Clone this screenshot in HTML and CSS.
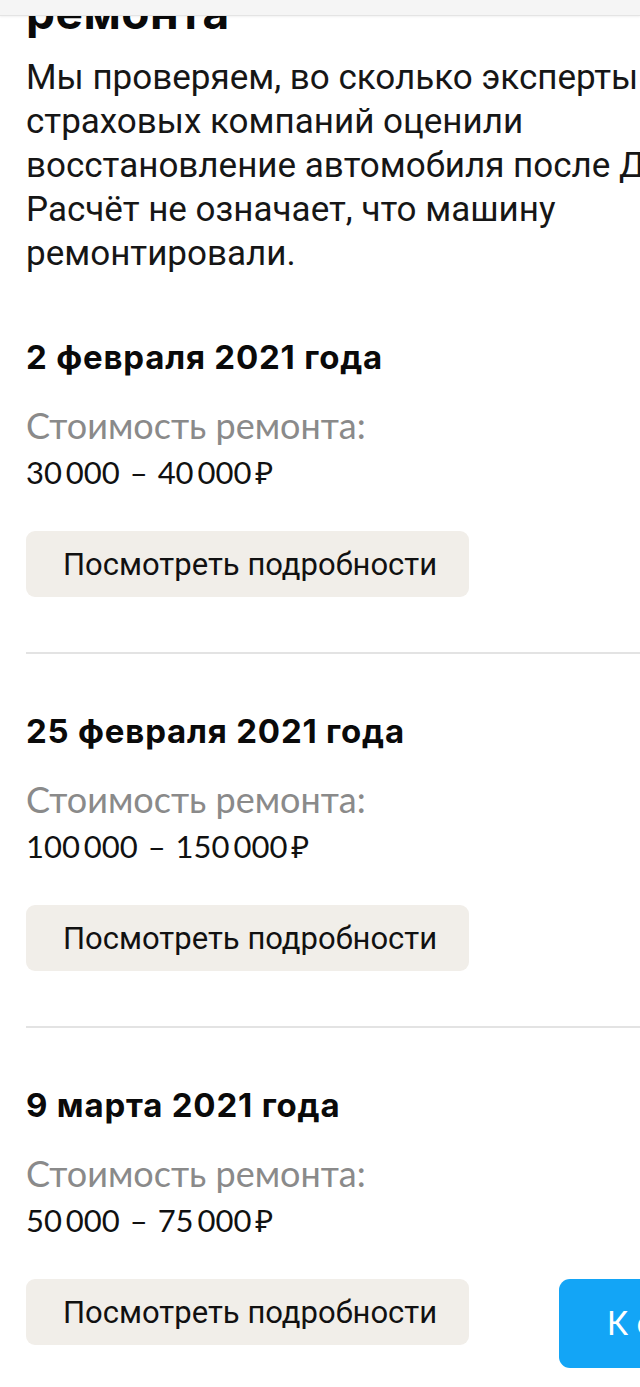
FILE: index.html
```html
<!DOCTYPE html>
<html lang="ru">
<head>
<meta charset="utf-8">
<title>История расчётов ремонта</title>
<link rel="stylesheet" href="styles.css">
</head>
<body>
<div class="topbar"></div>
<main class="page">
  <h1 class="title">ремонта</h1>
  <p class="intro">Мы проверяем, во сколько эксперты<br>страховых компаний оценили<br>восстановление автомобиля после ДТП.<br>Расчёт не означает, что машину<br>ремонтировали.</p>

  <section class="entry">
    <h2 class="date">2 февраля 2021 года</h2>
    <div class="label">Стоимость ремонта:</div>
    <div class="price">30&#8201;000 – 40&#8201;000&#8201;₽</div>
    <div class="actions"><button class="btn-details">Посмотреть подробности</button></div>
  </section>

  <section class="entry">
    <h2 class="date">25 февраля 2021 года</h2>
    <div class="label">Стоимость ремонта:</div>
    <div class="price">100&#8201;000 – 150&#8201;000&#8201;₽</div>
    <div class="actions"><button class="btn-details">Посмотреть подробности</button></div>
  </section>

  <section class="entry last">
    <h2 class="date">9 марта 2021 года</h2>
    <div class="label">Стоимость ремонта:</div>
    <div class="price">50&#8201;000 – 75&#8201;000&#8201;₽</div>
    <div class="actions">
      <button class="btn-details">Посмотреть подробности</button>
      <button class="btn-primary">К отчёту</button>
    </div>
  </section>
</main>
</body>
</html>
```
FILE: styles.css
```css
html, body {
  margin: 0;
  padding: 0;
  background: #ffffff;
  overflow-x: hidden;
}
body {
  font-family: Roboto, "Noto Sans", sans-serif;
  color: #111111;
}
.topbar {
  position: fixed;
  top: 0;
  left: 0;
  right: 0;
  height: 15px;
  background: #f5f5f5;
  border-bottom: 1px solid #e4e4e4;
  box-shadow: 0 1px 2px rgba(0, 0, 0, 0.06);
  z-index: 5;
}
.page {
  width: 750px;
  box-sizing: border-box;
  padding-left: 26px;
}
.title {
  margin: -13px 0 0;
  font-family: Inter, "Noto Sans", sans-serif;
  font-weight: 700;
  font-size: 46px;
  line-height: 50px;
  letter-spacing: 0.5px;
  color: #0a0a0a;
}
.intro {
  margin: 19px 0 0;
  font-family: Roboto, "Noto Sans", sans-serif;
  font-size: 35px;
  line-height: 44px;
  color: #161616;
  white-space: nowrap;
}
.entry {
  padding: 57px 0 55px;
  border-bottom: 2px solid #e3e3e3;
}
.entry:first-of-type {
  padding-top: 61px;
}
.entry.last {
  border-bottom: none;
  padding-bottom: 20px;
}
.date {
  margin: 0;
  font-family: Inter, "Noto Sans", sans-serif;
  font-weight: 700;
  font-size: 33px;
  line-height: 40px;
  color: #0a0a0a;
  letter-spacing: 0.8px;
}
.label {
  margin-top: 26px;
  font-family: Lato, "Noto Sans", sans-serif;
  font-size: 36px;
  line-height: 44px;
  color: #8a8a8a;
}
.price {
  font-family: Lato, "Noto Sans", sans-serif;
  font-size: 31px;
  line-height: 50px;
  word-spacing: 2px;
  color: #111111;
}
.actions {
  margin-top: 34px;
  display: flex;
  align-items: flex-start;
  gap: 90px;
}
.btn-details {
  flex-shrink: 0;
  width: 443px;
  height: 66px;
  padding: 0 0 0 37px;
  border: none;
  border-radius: 9px;
  background: #f1eee9;
  font-family: Roboto, "Noto Sans", sans-serif;
  font-size: 31px;
  color: #111111;
  text-align: left;
}
.btn-primary {
  flex-shrink: 0;
  width: 240px;
  height: 89px;
  padding: 0 0 0 48px;
  border: none;
  border-radius: 11px;
  background: #13a5f6;
  font-family: Roboto, "Noto Sans", sans-serif;
  font-size: 33px;
  color: #ffffff;
  text-align: left;
}
```
